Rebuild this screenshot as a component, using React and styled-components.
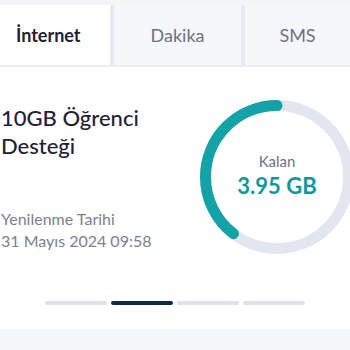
import React from 'react';
import styled, { createGlobalStyle } from 'styled-components';

const GlobalStyle = createGlobalStyle`
  html, body {
    margin: 0;
    padding: 0;
    background: #ffffff;
    font-family: "Lato", "Noto Sans", sans-serif;
  }
`;

const tabs = [
  { label: 'İnternet', width: 110, active: true },
  { label: 'Dakika', width: 127 },
  { label: 'SMS', width: 105 },
];

const bars = [false, true, false, false];

export default function App() {
  const used = 3.95 / 10;
  const r = 71.5;
  const c = 2 * Math.PI * r;

  return (
    <Page>
      <GlobalStyle />
      <TopStrip />
      <TabBar>
        {tabs.map((t) => (
          <Tab key={t.label} $active={t.active} style={{ width: t.width }}>
            {t.label}
          </Tab>
        ))}
      </TabBar>
      <Content>
        <Info>
          <Title>10GB Öğrenci<br />Desteği</Title>
          <Renewal>
            <span>Yenilenme Tarihi</span>
            <span>31 Mayıs 2024 09:58</span>
          </Renewal>
        </Info>
        <Gauge>
          <svg width="154" height="154" viewBox="0 0 154 154">
            <circle cx="77" cy="77" r={r} fill="none" stroke="#e3e6ef" strokeWidth="11" />
            <circle
              cx="77"
              cy="77"
              r={r}
              fill="none"
              stroke="#12a2a7"
              strokeWidth="11"
              strokeLinecap="round"
              strokeDasharray={`${c * used} ${c}`}
              transform="rotate(-90 77 77) scale(1 -1) translate(0 -154)"
            />
          </svg>
          <GaugeText>
            <Label>Kalan</Label>
            <Amount>3.95 GB</Amount>
          </GaugeText>
        </Gauge>
      </Content>
      <Dots>
        {bars.map((on, i) => (
          <Bar key={i} $on={on} />
        ))}
      </Dots>
      <Footer />
    </Page>
  );
}

const Page = styled.div`
  width: 350px;
  height: 350px;
  overflow: hidden;
  display: flex;
  flex-direction: column;
`;

const TopStrip = styled.div`
  height: 5px;
  flex-shrink: 0;
  background: #f4f5f8;
`;

const TabBar = styled.div`
  display: flex;
  flex-shrink: 0;
  gap: 4px;
  height: 60px;
  background: #e8e9f0;
  border-bottom: 2px solid #ececf1;
`;

const Tab = styled.div`
  flex-shrink: 0;
  display: flex;
  align-items: center;
  justify-content: ${(p) => (p.$active ? 'flex-start' : 'center')};
  padding-left: ${(p) => (p.$active ? '16px' : '0')};
  box-sizing: border-box;
  background: ${(p) => (p.$active ? '#ffffff' : '#f6f7fb')};
  color: ${(p) => (p.$active ? '#1f2235' : '#6d7182')};
  font-size: 18px;
  font-weight: ${(p) => (p.$active ? 700 : 400)};
`;

const Content = styled.div`
  display: flex;
  flex-shrink: 0;
  justify-content: space-between;
  padding: 33px 0 0 1px;
  height: 167px;
`;

const Info = styled.div`
  display: flex;
  flex-direction: column;
  padding-top: 4px;
`;

const Title = styled.div`
  font-size: 22px;
  line-height: 28px;
  color: #1f2235;
  font-weight: 500;
`;

const Renewal = styled.div`
  margin-top: 48px;
  display: flex;
  flex-direction: column;
  font-size: 16px;
  line-height: 22px;
  color: #7b7f90;
`;

const Gauge = styled.div`
  position: relative;
  width: 154px;
  height: 154px;
  margin-right: -4px;
`;

const GaugeText = styled.div`
  position: absolute;
  inset: 0;
  display: flex;
  flex-direction: column;
  align-items: center;
  justify-content: center;
  padding-bottom: 4px;
`;

const Label = styled.div`
  font-size: 15px;
  color: #6d7182;
  line-height: 22px;
`;

const Amount = styled.div`
  font-size: 22px;
  font-weight: 700;
  color: #10979c;
  line-height: 28px;
`;

const Dots = styled.div`
  display: flex;
  flex-shrink: 0;
  justify-content: center;
  gap: 4px;
  padding-top: 34px;
  padding-right: 1px;
  height: 28px;
`;

const Bar = styled.div`
  width: 62px;
  height: 4px;
  border-radius: 2px;
  background: ${(p) => (p.$on ? '#0d2a4a' : '#dfe2ea')};
`;

const Footer = styled.div`
  flex: 1;
  background: #f6f7f9;
`;
